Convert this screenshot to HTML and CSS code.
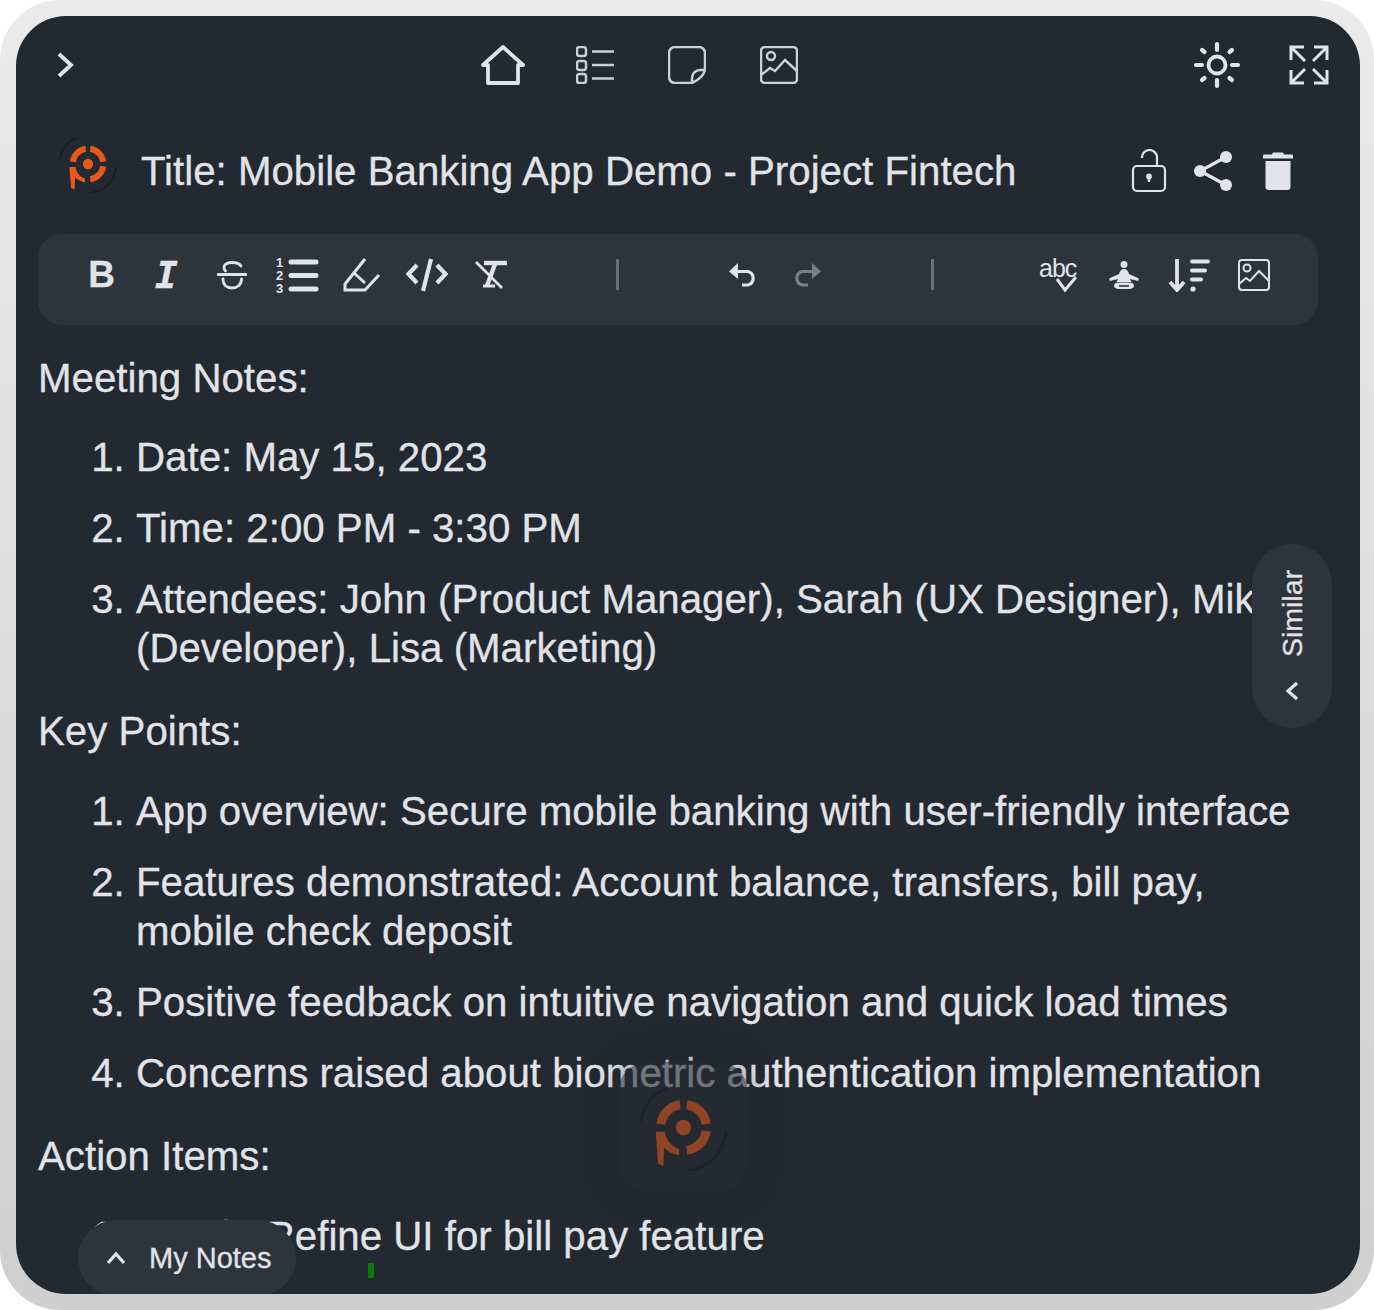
FILE: index.html
```html
<!DOCTYPE html>
<html lang="en">
<head>
  <meta charset="UTF-8">
  <title>Mobile Banking App Demo - Project Fintech</title>
  <link rel="stylesheet" href="styles.css">
</head>
<body>

  <svg class="defs" width="0" height="0">
    <symbol id="logo" viewBox="-130 -130 260 260">
      <g fill="none" stroke-width="27">
        <path class="logo-mark" d="M-68 -10A68 68 0 0 1 -10 -68"/>
        <path class="logo-mark" d="M10 -68A68 68 0 0 1 68 -10"/>
        <path class="logo-mark" d="M68 10A68 68 0 0 1 10 68"/>
      </g>
      <path class="logo-fill" d="M-83 13H-56C-52 38 -35 58 -13 65V83C-30 80 -46 72 -58 61L-60 115L-76 108Z"/>
      <circle class="logo-fill" cx="0" cy="0" r="23"/>
      <g fill="none" stroke="#1b1e23" stroke-width="8" stroke-linecap="round">
        <path d="M-128 -19A128 128 0 0 1 -53 -117"/>
        <path d="M127 15A128 128 0 0 1 17 128"/>
      </g>
    </symbol>
  </svg>

  <div class="frame">
    <div class="card">

      <div class="topbar">
        <svg class="icon" width="18" height="26" viewBox="0 0 18 26" stroke-width="3.800"><path d="M3 2L15 13L3 24"/></svg>
        <div class="nav-center">
          <svg class="icon home" width="44" height="40" viewBox="0 0 44 40" stroke-width="3.800" stroke-linejoin="round"><path d="M2 20L22 2L42 20H37V38H7V20Z"/></svg>
          <svg class="icon dim" width="38" height="38" viewBox="0 0 38 38" stroke-width="2.500">
            <rect x="1" y="1" width="9" height="9" rx="2.500"/><rect x="1" y="15" width="9" height="9" rx="2.500"/><rect x="1" y="28" width="9" height="9" rx="2.500"/>
            <path d="M16 5.500H38M16 19H38M16 32.500H38"/>
          </svg>
          <svg class="icon dim" width="38" height="38" viewBox="0 0 38 38" stroke-width="2.500"><path d="M7 1H31A6 6 0 0 1 37 7V24Q35 32 24 37H7A6 6 0 0 1 1 31V7A6 6 0 0 1 7 1Z"/><path d="M24 37V32A8 8 0 0 1 32 24H37"/></svg>
          <svg class="icon dim" width="38" height="38" viewBox="0 0 38 38" stroke-width="2.500"><rect x="1" y="1" width="36" height="36" rx="4"/><circle cx="11" cy="10" r="4"/><path d="M1 29L10 22L15 25L25 14L37 25"/></svg>
        </div>
        <div class="nav-right">
          <svg class="icon" width="48" height="48" viewBox="-24 -24 48 48" stroke-width="3.800" stroke-linecap="round">
            <circle r="8.500"/>
            <path stroke-width="4.200" d="M0 -21V-15M0 21V15M-21 0H-15M21 0H15M-15 -15L-12.500 -13M15 -15L12.500 -13M-15 15L-12.500 13M15 15L12.500 13"/>
          </svg>
          <svg class="icon" width="40" height="40" viewBox="0 0 40 40" stroke-width="3">
            <path d="M2 15V2H15M2 2L16 16M25 2H38V15M38 2L24 16M2 25V38H15M2 38L16 24M25 38H38V25M38 38L24 24"/>
          </svg>
        </div>
      </div>

      <div class="title-row">
        <svg class="logo" width="58" height="58"><use href="#logo"/></svg>
        <h1 class="note-title">Title: Mobile Banking App Demo - Project Fintech</h1>
        <div class="title-actions">
          <svg class="icon" width="36" height="44" viewBox="0 0 36 44" stroke-width="2.200">
            <rect x="2" y="17" width="32" height="25" rx="4"/><path d="M11 9A7.500 7.500 0 0 1 26 8V17"/>
            <path stroke-width="2.400" d="M18 27V33"/><circle class="solid" cx="18" cy="27.500" r="1.800"/>
          </svg>
          <svg class="icon" width="40" height="42" viewBox="0 0 40 42" stroke-width="3.200">
            <path d="M32 7L6 21L32 35"/>
            <circle class="solid" stroke="none" cx="32" cy="7" r="6"/><circle class="solid" stroke="none" cx="6" cy="21" r="6"/><circle class="solid" stroke="none" cx="32" cy="35" r="6"/>
          </svg>
          <svg class="icon trash" width="30" height="40" viewBox="0 0 30 40">
            <path class="solid" stroke="none" d="M10 1.500H20L21 3.500H29A1 1 0 0 1 30 4.500V7.500H0V4.500A1 1 0 0 1 1 3.500H9ZM2.500 10H27.500V36A3 3 0 0 1 24.500 39H5.500A3 3 0 0 1 2.500 36Z"/>
          </svg>
        </div>
      </div>

      <div class="toolbar">
        <div class="tool-group">
          <span class="tool tool-bold">B</span>
          <span class="tool tool-italic">I</span>
          <span class="tool">
            <svg class="icon" width="30" height="30" viewBox="0 0 30 30" stroke-width="2.800" stroke-linecap="round"><path d="M1 14.500H29"/><path d="M24 6C22 3 19 2.500 15 2.500S7 4 7 7.500C7 9 7.500 10 8.500 11"/><path d="M6 19C6 25 10 28 15 28S24.500 25 24.500 19"/></svg>
          </span>
          <span class="tool">
            <svg class="icon" width="44" height="42" viewBox="0 -2 44 42" stroke-width="5">
              <text class="icon-text" x="1" y="11">1</text><text class="icon-text" x="1" y="24">2</text><text class="icon-text" x="1" y="37">3</text>
              <path stroke-linecap="round" d="M16 6H41M16 19.500H41M16 33H41"/>
            </svg>
          </span>
          <span class="tool">
            <svg class="icon" width="38" height="34" viewBox="0 0 38 34" stroke-width="3"><path d="M22 1L2 26V32H22L36 17"/><path d="M11 15L22 25"/></svg>
          </span>
          <span class="tool">
            <svg class="icon" width="42" height="34" viewBox="0 0 42 34" stroke-width="4.200"><path d="M11 7L2.500 16L11 25M31 7L39.500 16L31 25M25 1L17 33"/></svg>
          </span>
          <span class="tool">
            <svg class="icon" width="34" height="30" viewBox="0 0 34 30" stroke-width="2.600"><path stroke-width="4.400" d="M9 3H32"/><path stroke-width="4.400" d="M20 4L12 26"/><path stroke-width="3" d="M8 26H20"/><path d="M1 2L27 28"/></svg>
          </span>
        </div>
        <span class="divider"></span>
        <div class="tool-group">
          <span class="tool tool-narrow">
            <svg class="icon" width="30" height="24" viewBox="0 0 30 24" stroke-width="3.200"><path class="solid" stroke="none" d="M10 0V16L1 8.500Z"/><path d="M8 8.500H20A7 7 0 0 1 20 22H14"/></svg>
          </span>
          <span class="tool tool-narrow">
            <svg class="icon off" width="30" height="24" viewBox="0 0 30 24" stroke-width="3.200"><path class="solid" stroke="none" d="M20 0V16L29 8.500Z"/><path d="M22 8.500H10A7 7 0 0 0 10 22H16"/></svg>
          </span>
        </div>
        <span class="divider"></span>
        <div class="tool-group">
          <span class="tool">
            <svg class="icon" width="42" height="42" viewBox="0 -6 42 42" stroke-width="3"><text class="icon-text abc" x="1" y="17">abc</text><path d="M19 19L27 30L38 17"/></svg>
          </span>
          <span class="tool">
            <svg class="icon" width="32" height="28" viewBox="0 0 32 28">
              <circle class="solid" stroke="none" cx="16" cy="3.500" r="3.500"/>
              <path class="solid" stroke="none" d="M16 8C13 8 12 10 11 13L1 17.500L2 20L10 18L8.500 21H23.500L22 18L30 20L31 17.500L21 13C20 10 19 8 16 8Z"/>
              <path class="solid" stroke="none" d="M6 24.500C6 22.500 8 21.500 11 21.500H21C24 21.500 26 22.500 26 24.500S24 28 21 28H11C8 28 6 26.500 6 24.500Z"/>
              <path stroke="#2e343c" stroke-width="1.600" d="M11 25H21"/>
            </svg>
          </span>
          <span class="tool">
            <svg class="icon" width="42" height="34" viewBox="0 0 42 34" stroke-width="3.800">
              <path d="M9 1V31M2 24L9 32L16 24"/>
              <path stroke-linecap="round" stroke-width="4" d="M24 3.500H40M24 12.500H37M24 21.500H33"/>
              <circle class="solid" stroke="none" cx="25" cy="31" r="2.600"/>
            </svg>
          </span>
          <span class="tool">
            <svg class="icon" width="32" height="32" viewBox="0 0 32 32" stroke-width="2"><rect x="1" y="1" width="30" height="30" rx="3"/><circle cx="9" cy="9" r="3.500"/><path d="M1 25L8 19L12 22L21 12L31 22"/></svg>
          </span>
        </div>
      </div>

      <div class="note-body">
        <p>Meeting Notes:</p>
        <ol>
          <li>Date: May 15, 2023</li>
          <li>Time: 2:00 PM - 3:30 PM</li>
          <li>Attendees: John (Product Manager), Sarah (UX Designer), Mike (Developer), Lisa (Marketing)</li>
        </ol>
        <p>Key Points:</p>
        <ol>
          <li>App overview: Secure mobile banking with user-friendly interface</li>
          <li>Features demonstrated: Account balance, transfers, bill pay, mobile check deposit</li>
          <li>Positive feedback on intuitive navigation and quick load times</li>
          <li>Concerns raised about biometric authentication implementation</li>
        </ol>
        <p>Action Items:</p>
        <ol>
          <li>Sarah: Refine UI for bill pay feature</li>
        </ol>
      </div>

      <div class="similar-tab">
        <span class="similar-label">Similar</span>
        <svg class="icon" width="14" height="20" viewBox="0 0 14 20" stroke-width="3.200"><path d="M12 2L3 10L12 18"/></svg>
      </div>

      <div class="loader">
        <svg width="87" height="87"><use href="#logo"/></svg>
      </div>

      <span class="sync-mark"></span>

      <div class="notes-tab">
        <svg class="icon" width="20" height="14" viewBox="0 0 20 14" stroke-width="3.200"><path d="M2 12L10 3L18 12"/></svg>
        <span>My Notes</span>
      </div>

    </div>
  </div>

</body>
</html>
```

FILE: styles.css
```css
* {
  box-sizing: border-box;
}

html, body {
  margin: 0;
  height: 1310px;
  overflow: hidden;
  background: #fff;
}

body {
  font-family: "Liberation Sans", Arial, sans-serif;
  color: #e1e3e8;
  -webkit-text-stroke: 0.3px #e1e3e8;
}

.defs {
  position: absolute;
}

.logo-mark {
  stroke: #e85a1a;
}

.logo-fill {
  fill: #e85a1a;
}

.frame {
  height: 1310px;
  padding: 16px 14px 16px 16px;
  border-radius: 60px;
  background: linear-gradient(#ebebeb, #cfcfcf);
}

.card {
  position: relative;
  display: flex;
  flex-direction: column;
  height: 100%;
  overflow: hidden;
  border-radius: 50px;
  background: #232930;
}

.icon {
  display: block;
  flex: none;
  fill: none;
  stroke: #e1e3e8;
}

.icon.dim {
  stroke: #cdcfd3;
}

.icon.off {
  stroke: #7c8085;
}

.icon .solid {
  fill: #e1e3e8;
}

.icon.off .solid {
  fill: #7c8085;
}

.icon-text {
  font-family: "Liberation Sans", Arial, sans-serif;
  font-size: 13px;
  font-weight: 700;
  fill: #e1e3e8;
  stroke: none;
}

.icon-text.abc {
  font-size: 25px;
  font-weight: 400;
  letter-spacing: -1px;
}

/* top nav */
.topbar {
  display: flex;
  align-items: center;
  flex: none;
  height: 98px;
  padding: 0 31px 0 40px;
}

.nav-center {
  display: flex;
  align-items: center;
  gap: 54px;
  margin-left: 407px;
}

.home {
  margin-right: -3px;
}

.nav-right {
  display: flex;
  align-items: center;
  gap: 48px;
  margin-left: auto;
}

/* title */
.title-row {
  display: flex;
  align-items: center;
  flex: none;
  height: 114px;
  padding: 0 67px 0 43px;
}

.logo {
  margin-bottom: 14px;
}

.note-title {
  margin: 2px 0 0 24px;
  font-size: 40.25px;
  font-weight: 400;
}

.title-actions {
  display: flex;
  align-items: center;
  gap: 27px;
  margin-left: auto;
}

.trash {
  margin-left: 2px;
}

/* editor toolbar */
.toolbar {
  display: flex;
  align-items: center;
  flex: none;
  height: 91px;
  margin: 6px 42px 0 22px;
  padding: 0 30px 10px 31px;
  border-radius: 24px;
  background: #2e343c;
}

.tool-group {
  display: flex;
}

.tool {
  display: flex;
  justify-content: center;
  align-items: center;
  width: 65px;
  height: 40px;
}

.tool-narrow {
  width: 64px;
}

.tool-bold {
  font-size: 37px;
  font-weight: 700;
}

.tool-italic {
  font-family: "DejaVu Sans Mono", monospace;
  font-size: 38px;
  font-weight: 700;
  font-style: italic;
}

.divider {
  width: 3px;
  height: 31px;
  margin: 0 92px;
  background: #6a6f75;
}

/* note text */
.note-body {
  flex: 1;
  min-height: 0;
  margin: 29px 42px 0 22px;
  font-size: 40.25px;
  line-height: 49px;
}

.note-body p {
  margin: 0 0 30px;
}

.note-body ol + p {
  margin-bottom: 31px;
}

.note-body ol {
  margin: 0;
  padding: 0 0 12px 98px;
}

.note-body li {
  margin-bottom: 22px;
}

/* overlays */
.similar-tab {
  position: absolute;
  top: 528px;
  right: 28px;
  display: flex;
  flex-direction: column;
  align-items: center;
  gap: 24px;
  width: 80px;
  height: 184px;
  padding-top: 26px;
  border-radius: 40px;
  background: #2e343c;
}

.similar-label {
  font-size: 28.5px;
  writing-mode: vertical-rl;
  transform: rotate(180deg);
}

.notes-tab {
  position: absolute;
  left: 62px;
  bottom: -2px;
  display: flex;
  align-items: center;
  gap: 23px;
  width: 218px;
  height: 76px;
  padding-left: 28px;
  border-radius: 38px;
  background: #2e343c;
  font-size: 29px;
}

.loader {
  position: absolute;
  left: 602px;
  top: 1046px;
  display: flex;
  justify-content: center;
  align-items: center;
  width: 130px;
  height: 130px;
  border-radius: 30px;
  background: rgba(38, 44, 52, 0.6);
  box-shadow: 0 0 30px rgba(35, 41, 48, 0.45);
}

.loader svg {
  opacity: 0.55;
}

.sync-mark {
  position: absolute;
  left: 352px;
  top: 1247px;
  width: 6px;
  height: 15px;
  background: #0a7a0a;
}
```
